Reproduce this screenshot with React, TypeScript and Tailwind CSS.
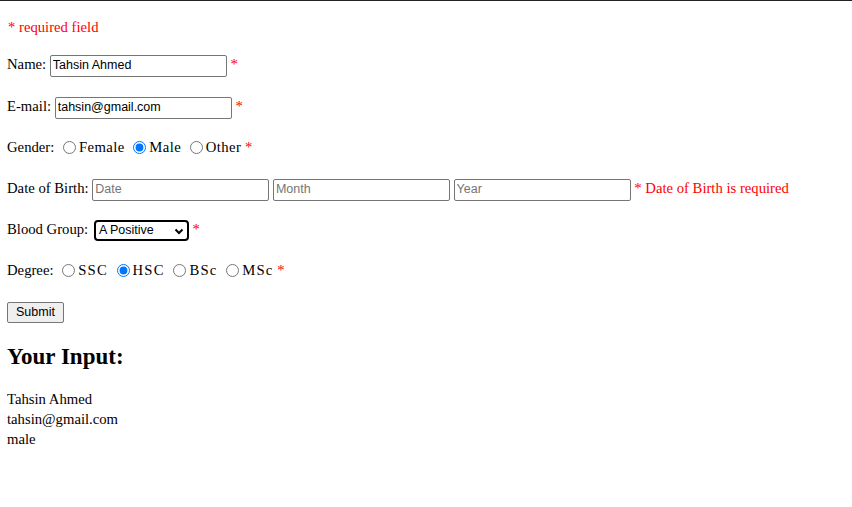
const Star = () => <span className="text-[#ff0000]">*</span>;

const TextBox = ({ value, placeholder }: { value?: string; placeholder?: string }) => (
    <input
        type="text"
        defaultValue={value}
        placeholder={placeholder}
        className="w-[177px] h-[22px] align-middle border border-[#767676] rounded-[2px] px-[2px] bg-white text-black text-[12.5px] font-['Liberation_Sans',Arial,sans-serif] placeholder:text-[#757575] outline-none"
    />
);

const Radio = ({ name, checked }: { name: string; checked?: boolean }) => (
    <input
        type="radio"
        name={name}
        defaultChecked={checked}
        className="w-[13px] h-[13px] align-middle ml-[5px] mr-[3px] -mt-[2px] accent-[#0075ff]"
    />
);

// radio labels render a touch wider in the reference
const Opt = ({ wide, children }: { wide?: boolean; children: React.ReactNode }) => (
    <span className={wide ? "tracking-[1.2px]" : "tracking-[0.4px]"}>{children}</span>
);

const Row = ({ className = "", children }: { className?: string; children: React.ReactNode }) => (
    <div className={`h-[25px] leading-[25px] whitespace-nowrap ${className}`}>{children}</div>
);

export default function App() {
    return (
        <div className="min-h-screen bg-white text-black font-['Liberation_Serif','Times_New_Roman',serif] text-[14.7px]">
            <div className="h-px bg-[#222]"></div>
            <div className="pl-[7px] pr-2">
                <Row className="mt-[14px] pl-px text-[#ff0000]">* required field</Row>

                <Row className="mt-[12px]">
                    Name: <TextBox value="Tahsin Ahmed" /> <Star />
                </Row>

                <Row className="mt-[17px]">
                    E-mail: <TextBox value="tahsin@gmail.com" /> <Star />
                </Row>

                <Row className="mt-4">
                    Gender: <Radio name="gender" />
                    <Opt>Female</Opt> <Radio name="gender" checked />
                    <Opt>Male</Opt> <Radio name="gender" />
                    <Opt>Other</Opt> <Star />
                </Row>

                <Row className="mt-4">
                    Date of Birth: <TextBox placeholder="Date" /> <TextBox placeholder="Month" />{" "}
                    <TextBox placeholder="Year" />{" "}
                    <span className="text-[#ff0000]">* Date of Birth is required</span>
                </Row>

                <Row className="mt-4">
                    Blood Group:{" "}
                    <span className="ml-[2px] inline-flex align-middle items-center justify-between w-[95px] h-[21px] border-2 border-black rounded-[4px] pl-[3px] pr-[3px] leading-none text-[12.5px] font-['Liberation_Sans',Arial,sans-serif]">
                        <span>A Positive</span>
                        <svg width="10" height="10" viewBox="0 0 10 10" fill="none" stroke="black" strokeWidth="2">
                            <path d="M1.5 3.5 L5 7 L8.5 3.5" />
                        </svg>
                    </span>{" "}
                    <Star />
                </Row>

                <Row className="mt-4">
                    Degree: <Radio name="degree" />
                    <Opt wide>SSC</Opt> <Radio name="degree" checked />
                    <Opt wide>HSC</Opt> <Radio name="degree" />
                    <Opt wide>BSc</Opt> <Radio name="degree" />
                    <Opt wide>MSc</Opt> <Star />
                </Row>

                <Row className="mt-[16px]">
                    <button className="h-[21px] align-middle px-[8px] bg-[#efefef] border border-[#767676] rounded-[2px] leading-none text-[12.5px] font-['Liberation_Sans',Arial,sans-serif]">
                        Submit
                    </button>
                </Row>

                <h2 className="mt-[19px] h-[28px] leading-[28px] text-[23px] font-bold">Your Input:</h2>

                <div className="mt-[18px] leading-[20px]">
                    <div>Tahsin Ahmed</div>
                    <div>tahsin@gmail.com</div>
                    <div>male</div>
                </div>
            </div>
        </div>
    );
}
